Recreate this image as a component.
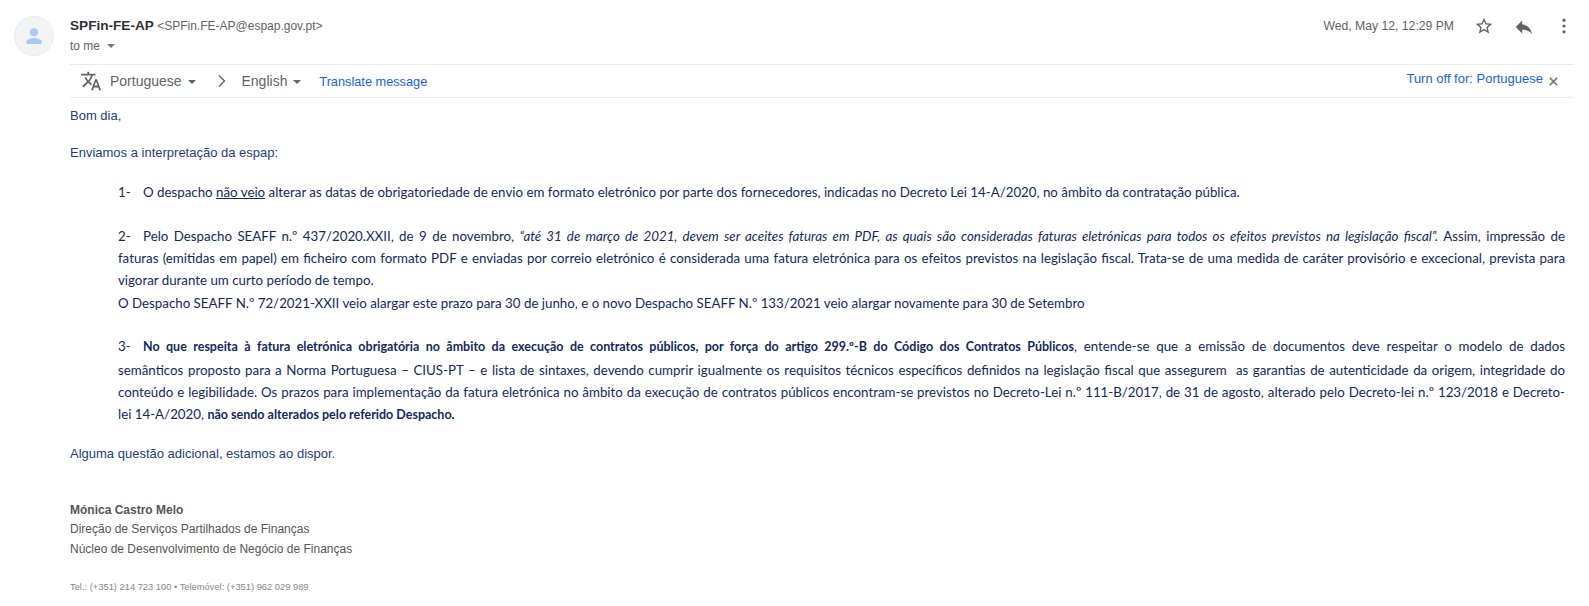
<script>
  const translateLinks = ["Portuguese", "English"];
</script>

<div class="message">
  <div class="avatar">
    <svg viewBox="0 0 24 24" width="24" height="24">
      <circle cx="12" cy="8.2" r="4" fill="#a8c7fa" />
      <path d="M4.3 19.5v-1.6c0-2.6 5.1-4 7.7-4s7.7 1.4 7.7 4v1.6c0 .3-.2.5-.5.5H4.8c-.3 0-.5-.2-.5-.5z" fill="#a8c7fa" />
    </svg>
  </div>

  <div class="main">
    <header class="head">
      <div class="sender">
        <div class="from"><strong>SPFin-FE-AP</strong> <span class="addr">&lt;SPFin.FE-AP@espap.gov.pt&gt;</span></div>
        <div class="to">to me <span class="caret small"></span></div>
      </div>
      <div class="meta">
        <span class="date">Wed, May 12, 12:29 PM</span>
        <svg class="star" viewBox="0 0 24 24" width="20" height="20">
          <path d="M22 9.24l-7.19-.62L12 2 9.19 8.63 2 9.24l5.46 4.73L5.82 21 12 17.27 18.18 21l-1.63-7.03L22 9.24zM12 15.4l-3.76 2.27 1-4.28-3.32-2.88 4.38-.38L12 6.1l1.71 4.04 4.38.38-3.32 2.88 1 4.28L12 15.4z" fill="#5f6368" />
        </svg>
        <svg class="reply" viewBox="0 0 24 24" width="22" height="22">
          <path d="M10 9V5l-7 7 7 7v-4.1c5 0 8.5 1.6 11 5.1-1-5-4-10-11-11z" fill="#5f6368" />
        </svg>
        <svg class="more" viewBox="0 0 24 24" width="20" height="20">
          <circle cx="12" cy="5" r="1.9" fill="#5f6368" />
          <circle cx="12" cy="12" r="1.9" fill="#5f6368" />
          <circle cx="12" cy="19" r="1.9" fill="#5f6368" />
        </svg>
      </div>
    </header>

    <div class="translate">
      <svg class="gt" viewBox="0 0 24 24" width="22" height="22">
        <path d="M12.87 15.07l-2.54-2.51.03-.03A17.5 17.5 0 0 0 14.07 6H17V4h-7V2H8v2H1v2h11.17A15.7 15.7 0 0 1 9 11.35 15.7 15.7 0 0 1 6.69 8h-2c.73 1.63 1.73 3.17 2.98 4.56l-5.09 5.02L4 19l5-5 3.11 3.11.76-2.04zM18.5 10h-2L12 22h2l1.12-3h4.75L21 22h2l-4.5-12zm-2.62 7l1.62-4.33L19.12 17h-3.24z" fill="#5f6368" />
      </svg>
      <span class="lang">{translateLinks[0]} <span class="caret"></span></span>
      <svg class="chev" viewBox="0 0 10 14" width="10" height="14">
        <path d="M2 1.5 7.5 7 2 12.5" fill="none" stroke="#5f6368" stroke-width="1.4" />
      </svg>
      <span class="lang">{translateLinks[1]} <span class="caret"></span></span>
      <a class="link tm" href="#top">Translate message</a>
      <a class="link off" href="#top">Turn off for: Portuguese</a>
      <svg class="close" viewBox="0 0 10 10" width="9" height="9">
        <path d="M1 1l8 8M9 1 1 9" stroke="#777" stroke-width="1.8" />
      </svg>
    </div>

    <div class="body">
      <p class="arial">Bom dia,</p>
      <p class="arial second">Enviamos a interpretação da espap:</p>

      <div class="cal first">
        <p><span class="num">1-</span>O despacho <u>não veio</u> alterar as datas de obrigatoriedade de envio em formato eletrónico por parte dos fornecedores, indicadas no Decreto Lei 14-A/2020, no âmbito da contratação pública.</p>
      </div>

      <div class="cal gap">
        <p class="j"><span class="num">2-</span>Pelo Despacho SEAFF n.º 437/2020.XXII, de 9 de novembro, <em>“até 31 de março de 2021, devem ser aceites faturas em PDF, as quais são consideradas faturas eletrónicas para todos os efeitos previstos na legislação fiscal”.</em> Assim, impressão de</p>
        <p class="j">faturas (emitidas em papel) em ficheiro com formato PDF e enviadas por correio eletrónico é considerada uma fatura eletrónica para os efeitos previstos na legislação fiscal. Trata-se de uma medida de caráter provisório e excecional, prevista para</p>
        <p>vigorar durante um curto período de tempo.</p>
        <p>O Despacho SEAFF N.º 72/2021-XXII veio alargar este prazo para 30 de junho, e o novo Despacho SEAFF N.º 133/2021 veio alargar novamente para 30 de Setembro</p>
      </div>

      <div class="cal gap">
        <p class="j"><span class="num">3-</span><strong>No que respeita à fatura eletrónica obrigatória no âmbito da execução de contratos públicos, por força do artigo 299.º-B do Código dos Contratos Públicos</strong>, entende-se que a emissão de documentos deve respeitar o modelo de dados</p>
        <p class="j">semânticos proposto para a Norma Portuguesa – CIUS-PT – e lista de sintaxes, devendo cumprir igualmente os requisitos técnicos específicos definidos na legislação fiscal que assegurem&nbsp; as garantias de autenticidade da origem, integridade do</p>
        <p class="j">conteúdo e legibilidade. Os prazos para implementação da fatura eletrónica no âmbito da execução de contratos públicos encontram-se previstos no Decreto-Lei n.º 111-B/2017, de 31 de agosto, alterado pelo Decreto-lei n.º 123/2018 e Decreto-</p>
        <p>lei 14-A/2020, <strong>não sendo alterados pelo referido Despacho.</strong></p>
      </div>

      <p class="arial closing">Alguma questão adicional, estamos ao dispor.</p>

      <div class="signature">
        <p><strong>Mónica Castro Melo</strong></p>
        <p>Direção de Serviços Partilhados de Finanças</p>
        <p>Núcleo de Desenvolvimento de Negócio de Finanças</p>
        <p class="tel">Tel.: (+351) 214 723 100 • Telemóvel: (+351) 962 029 989</p>
      </div>
    </div>
  </div>
</div>

<style>
  :global(body) {
    margin: 0;
    background: #fff;
  }

  .message {
    display: flex;
    height: 606px;
    overflow: hidden;
    padding: 16px 15px 0 14px;
    box-sizing: border-box;
    font-family: "Liberation Sans", Arial, sans-serif;
    color: #222;
  }

  .avatar {
    flex: none;
    width: 40px;
    height: 40px;
    box-sizing: border-box;
    margin-right: 16px;
    border: 1px solid #e8eaed;
    border-radius: 50%;
    background: #f1f3f4;
    display: grid;
    place-items: center;
  }

  .main {
    flex: 1;
    min-width: 0;
  }

  .head {
    display: flex;
    justify-content: space-between;
    height: 48px;
  }

  .from {
    font-size: 12px;
    line-height: 20px;
  }

  .from strong {
    font-size: 13.6px;
    color: #303134;
  }

  .addr {
    color: #5f6368;
  }

  .to {
    font-size: 12px;
    line-height: 20px;
    color: #5f6368;
  }

  .caret {
    display: inline-block;
    width: 0;
    height: 0;
    margin-left: 2px;
    vertical-align: 2px;
    border-left: 4px solid transparent;
    border-right: 4px solid transparent;
    border-top: 4px solid #5f6368;
  }

  .caret.small {
    margin-left: 4px;
    border-top-color: #777;
  }

  .meta {
    display: flex;
    align-items: flex-start;
    font-size: 12.2px;
    color: #5f6368;
  }

  .date {
    line-height: 20px;
    margin-right: 20px;
  }

  .star {
    margin-right: 19px;
  }

  .reply {
    margin-right: 19px;
  }

  .translate {
    display: flex;
    align-items: center;
    height: 32px;
    border-top: 1px solid #e8eaed;
    border-bottom: 1px solid #e8eaed;
    font-size: 14px;
    color: #5f6368;
    padding-left: 10px;
  }

  .gt {
    margin-right: 8px;
  }

  .lang {
    margin-right: 21px;
  }

  .chev {
    margin-right: 15px;
  }

  .link {
    color: #1a5fd0;
    text-decoration: none;
    font-size: 12.75px;
  }

  .tm {
    margin-left: -3px;
  }

  .off {
    margin-left: auto;
    margin-top: -5px;
    font-size: 13px;
  }

  .close {
    margin: 0 16px 0 6px;
  }

  p {
    margin: 0;
  }

  .body {
    padding-top: 9px;
    color: #234078;
  }

  .arial {
    font-size: 13px;
    line-height: 17px;
  }

  .second {
    margin-top: 20px;
  }

  .cal {
    font-family: Lato, sans-serif;
    font-size: 13.3px;
    line-height: 22.3px;
    color: #12295c;
    padding: 0 9px 0 48px;
  }

  .cal strong {
    font-size: 12.5px;
  }

  .first {
    margin-top: 20px;
  }

  .gap {
    margin-top: 21.4px;
  }

  .j {
    text-align: justify;
    text-align-last: justify;
  }

  .num {
    display: inline-block;
    width: 25px;
  }

  .closing {
    margin-top: 19px;
  }

  .signature {
    margin-top: 38.7px;
    font-size: 12px;
    line-height: 19.25px;
    color: #555;
  }

  .tel {
    margin-top: 19.5px;
    font-size: 9.33px;
    color: #888;
  }
</style>
